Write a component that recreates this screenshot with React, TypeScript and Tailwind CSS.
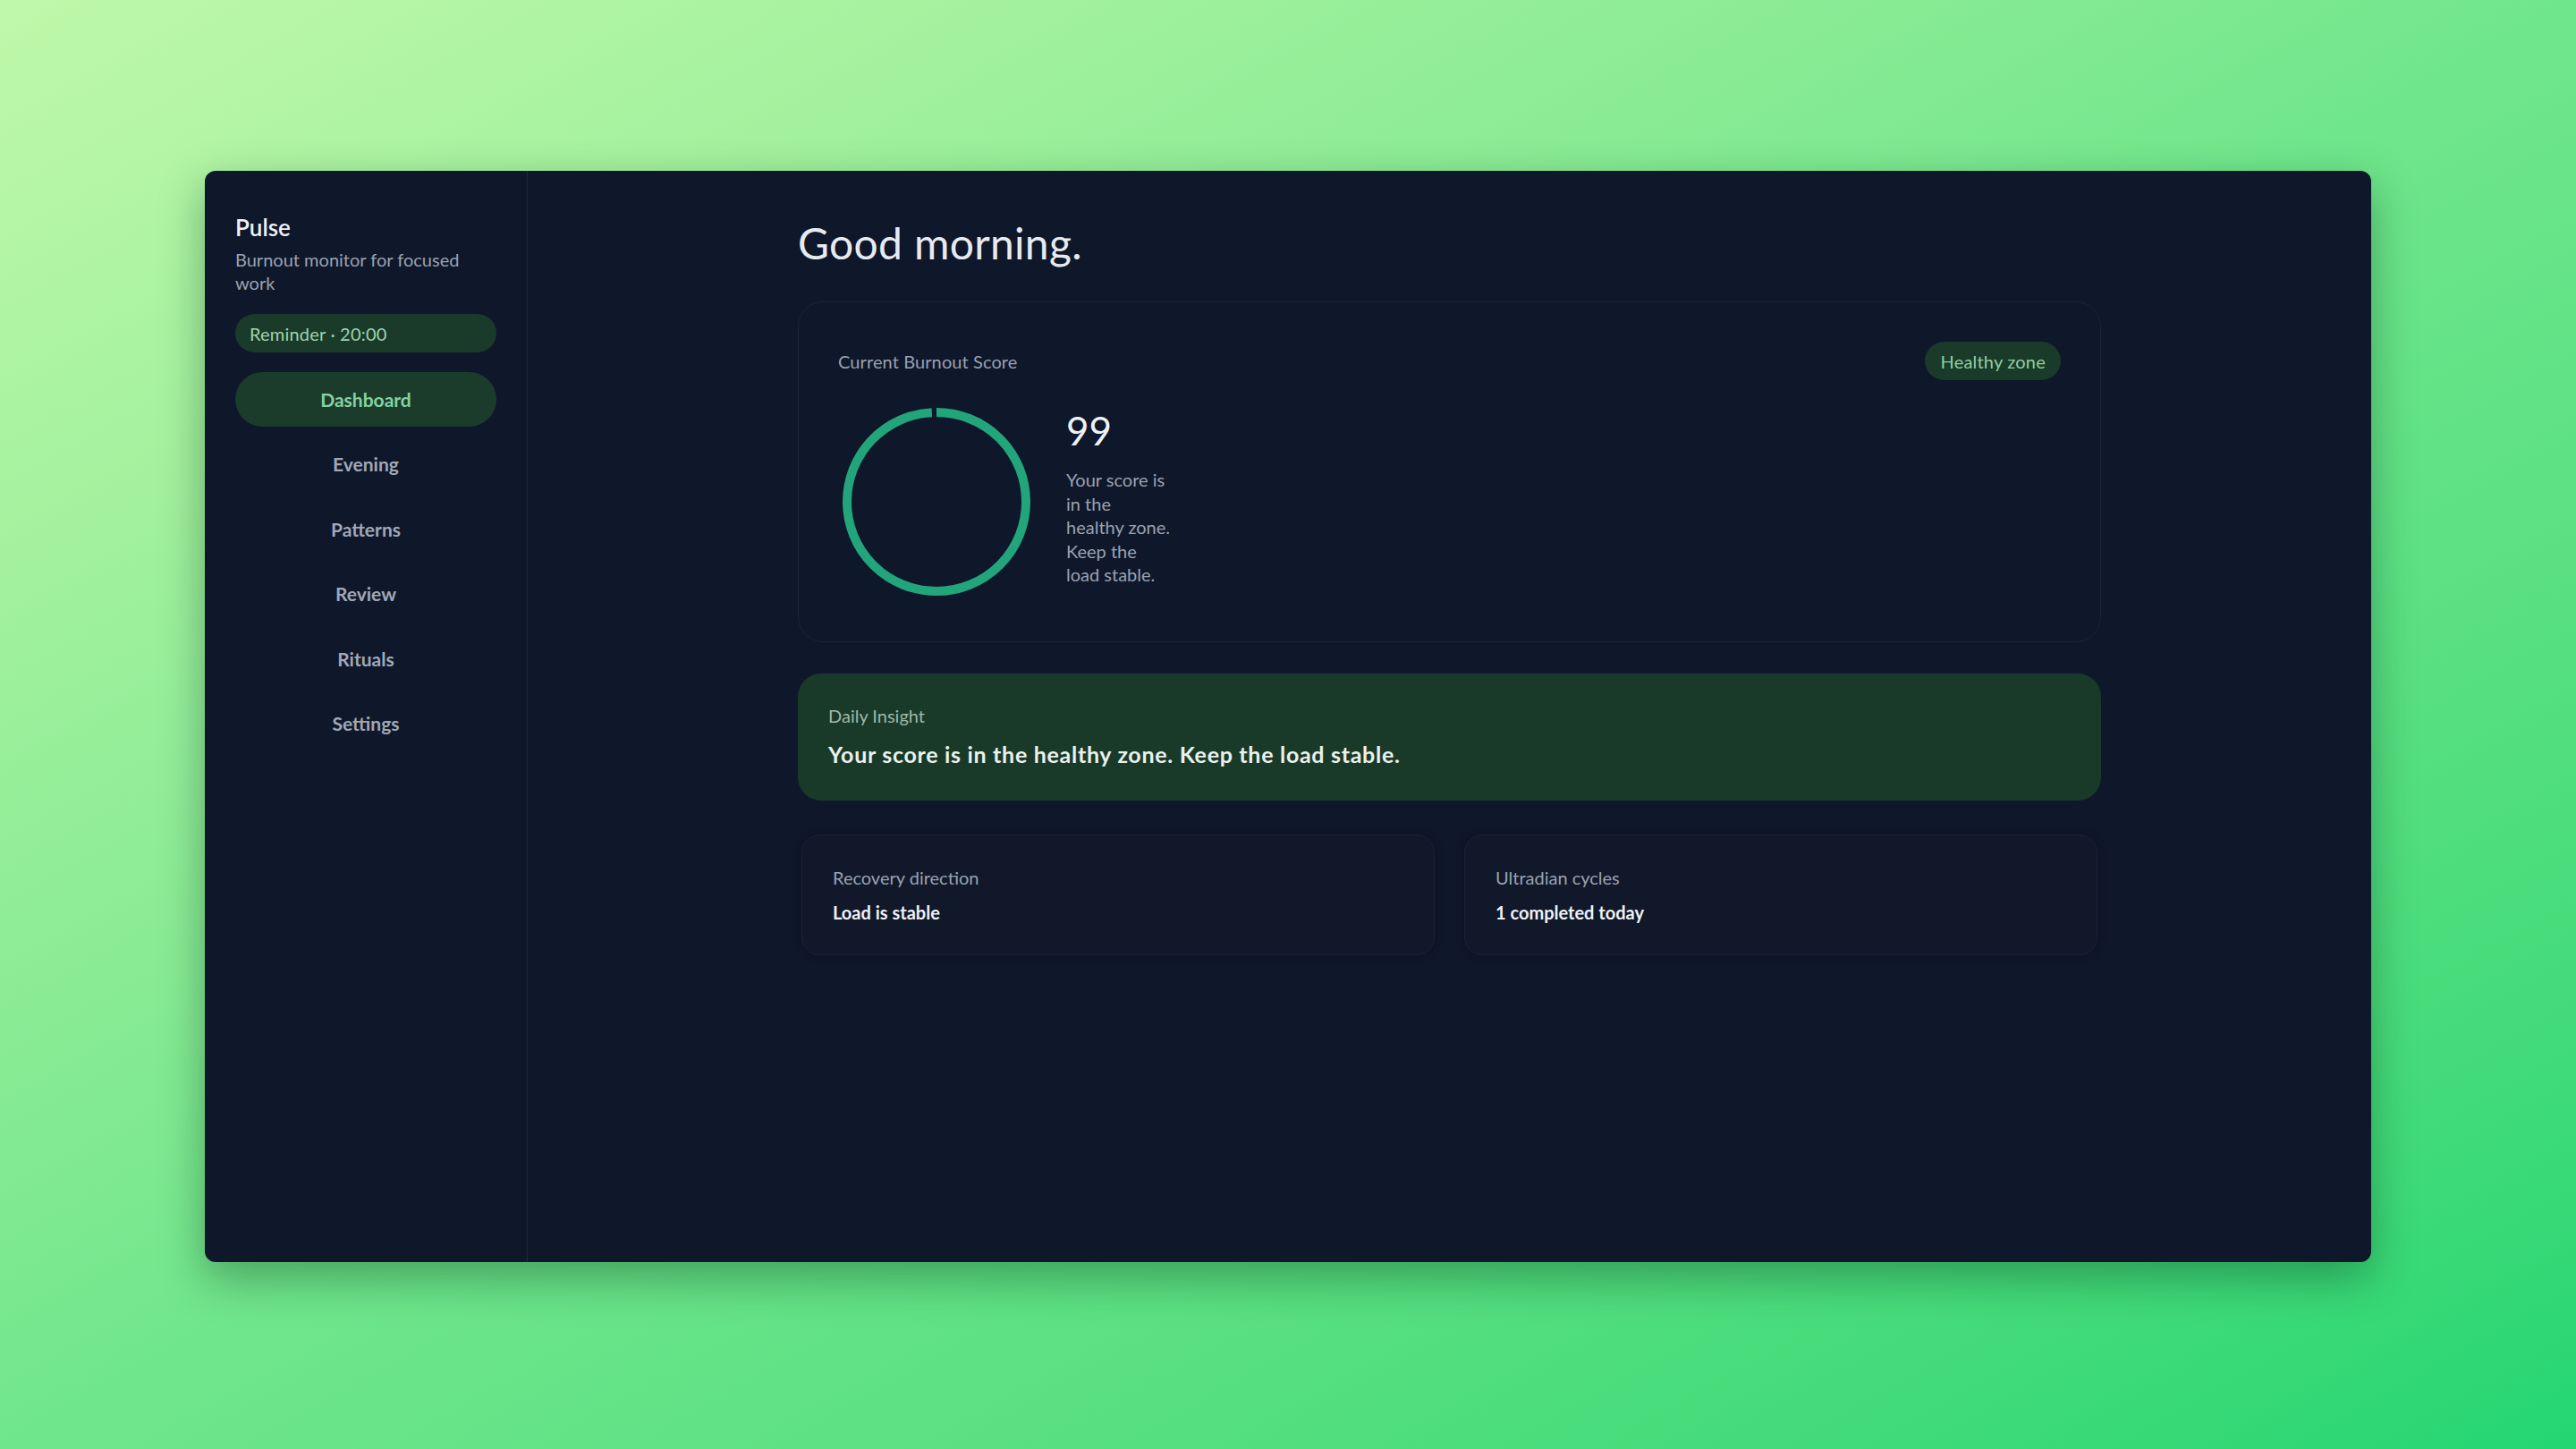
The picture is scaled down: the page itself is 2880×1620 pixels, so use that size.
import React from "react";

const NAV = ["Dashboard", "Evening", "Patterns", "Review", "Rituals", "Settings"];

function ScoreRing({ score }: { score: number }) {
  const r = 100;
  const c = 2 * Math.PI * r;
  return (
    <svg width="220" height="220" viewBox="0 0 220 220" className="shrink-0">
      <circle
        cx="110"
        cy="110"
        r={r}
        fill="none"
        stroke="#22a57b"
        strokeWidth="10"
        strokeDasharray={c}
        strokeDashoffset={c * (1 - score / 100)}
        transform="rotate(-90 110 110)"
      />
    </svg>
  );
}

function Sidebar() {
  return (
    <aside className="w-[361px] shrink-0 border-r border-[#1f2a3c] px-[34px] pt-[46px]">
      <div className="text-[26px] leading-[34px] font-semibold text-[#eef1f6]">Pulse</div>
      <div className="mt-[6px] text-[20px] leading-[26px] text-[#9aa2b1]">Burnout monitor for focused work</div>
      <div className="mt-[22px] h-[43px] rounded-full bg-[#1a3a2a] px-4 flex items-center text-[20px] tracking-[0.2px] text-[#9fd4ad]">
        Reminder · 20:00
      </div>
      <nav className="mt-[22px] flex flex-col gap-[11.5px]">
        {NAV.map((item, i) => (
          <div
            key={item}
            className={
              i === 0
                ? "h-[61px] rounded-full bg-[#1b3c2b] flex items-center justify-center text-[21px] font-bold text-[#82d3a2]"
                : "h-[61px] rounded-full flex items-center justify-center text-[21px] font-bold text-[#a0a8b7]"
            }
          >
            {item}
          </div>
        ))}
      </nav>
    </aside>
  );
}

function StatCard({ label, value }: { label: string; value: string }) {
  return (
    <div className="h-[135px] rounded-[20px] border border-[#1a2335] bg-[#10182a] px-[34px] pt-[33px] shadow-[0_0_10px_rgba(0,0,0,0.25)]">
      <div className="text-[20px] leading-[28px] text-[#9aa2b1]">{label}</div>
      <div className="mt-[11px] text-[20px] leading-[28px] font-bold text-[#eef1f6]">{value}</div>
    </div>
  );
}

export default function App() {
  return (
    <div className="w-[2880px] h-[1620px] bg-linear-to-br from-[#bff8aa] via-[#70e68c] to-[#22d672] pl-[229px] pt-[191px] font-['Lato',sans-serif]">
      <div className="w-[2422px] h-[1220px] rounded-[12px] bg-[#0f172a] flex overflow-hidden shadow-[0_18px_50px_rgba(10,60,30,0.4)]">
        <Sidebar />

        <main className="flex-1 pt-[52px]">
          <div className="w-[1457px] mx-auto flex flex-col">
            <h1 className="text-[48px] leading-[58px] font-normal tracking-[0.3px] text-[#e6eaf1]">Good morning.</h1>

            {/* Burnout score */}
            <section className="mt-[36px] h-[381px] rounded-[28px] border border-[#1b2536] px-[44px] pt-[44px]">
              <div className="flex items-center justify-between h-[43px]">
                <span className="text-[20px] tracking-[0.1px] text-[#98a1b0]">Current Burnout Score</span>
                <span className="h-[43px] rounded-full bg-[#1a3a2a] px-[17px] flex items-center text-[20px] tracking-[0.2px] text-[#8fcfa0]">
                  Healthy zone
                </span>
              </div>
              <div className="mt-[26px] flex items-start gap-[35px]">
                <ScoreRing score={99} />
                <div className="pt-[4px]">
                  <div className="text-[44px] leading-[53px] text-[#eef1f6]">99</div>
                  <p className="mt-[15px] w-[119px] text-[20px] leading-[26.5px] text-[#9aa2b1]">
                    Your score is in the healthy zone. Keep the load stable.
                  </p>
                </div>
              </div>
            </section>

            {/* Daily insight */}
            <section className="mt-[35px] h-[142px] rounded-[26px] bg-[#1a3a29] px-[34px] pt-[33px]">
              <div className="text-[20px] leading-[28px] text-[#9db8a6]">Daily Insight</div>
              <div className="mt-[13px] text-[25px] leading-[32px] font-bold tracking-[0.7px] text-[#e9f1eb]">
                Your score is in the healthy zone. Keep the load stable.
              </div>
            </section>

            <div className="mt-[38px] mx-1 grid grid-cols-2 gap-[33px]">
              <StatCard label="Recovery direction" value="Load is stable" />
              <StatCard label="Ultradian cycles" value="1 completed today" />
            </div>
          </div>
        </main>
      </div>
    </div>
  );
}
